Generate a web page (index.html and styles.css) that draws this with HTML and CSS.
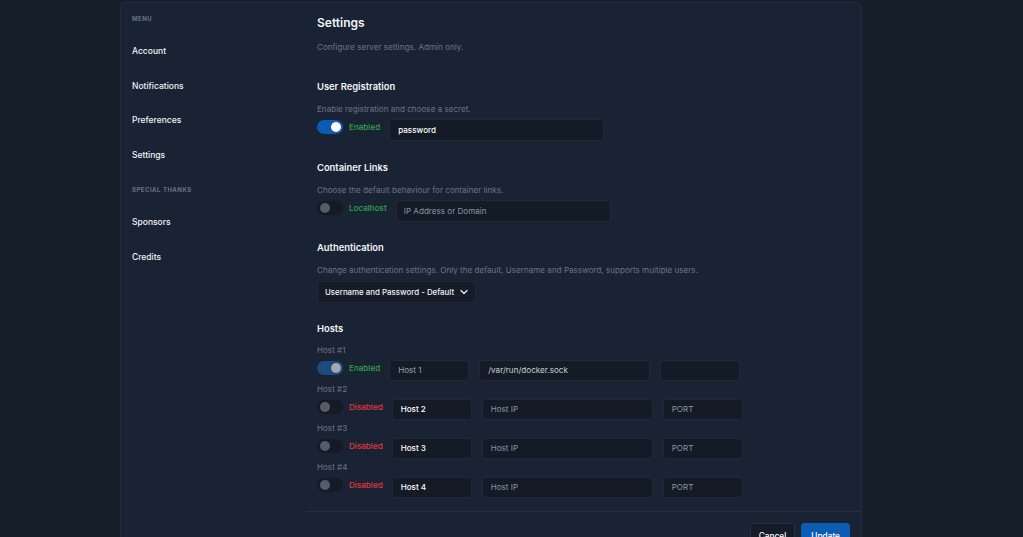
FILE: index.html
```html
<!DOCTYPE html>
<html lang="en">
<head>
<meta charset="utf-8">
<title>Settings</title>
<link rel="stylesheet" href="styles.css">
</head>
<body>
<div class="card">
  <aside class="sidebar">
    <div class="group-label">MENU</div>
    <a class="nav-item">Account</a>
    <a class="nav-item">Notifications</a>
    <a class="nav-item">Preferences</a>
    <a class="nav-item">Settings</a>
    <div class="group-label second">SPECIAL THANKS</div>
    <a class="nav-item">Sponsors</a>
    <a class="nav-item">Credits</a>
  </aside>
  <main class="main">
    <div class="content">
      <h1 class="title">Settings</h1>
      <p class="lead">Configure server settings. Admin only.</p>

      <h2 class="section-title">User Registration</h2>
      <p class="desc">Enable registration and choose a secret.</p>
      <div class="row">
        <span class="switch on"><span class="knob"></span></span>
        <span class="state green">Enabled</span>
        <div class="field w215 value">password</div>
      </div>

      <h2 class="section-title">Container Links</h2>
      <p class="desc">Choose the default behaviour for container links.</p>
      <div class="row">
        <span class="switch off"><span class="knob"></span></span>
        <span class="state green">Localhost</span>
        <div class="field w215 placeholder pad7">IP Address or Domain</div>
      </div>

      <h2 class="section-title">Authentication</h2>
      <p class="desc">Change authentication settings. Only the default, Username and Password, supports multiple users.</p>
      <div class="select">
        <span>Username and Password - Default</span>
        <svg class="chev" width="8" height="6" viewBox="0 0 8 6"><path d="M1 1.5 L4 4.5 L7 1.5" fill="none" stroke="#e6e9ee" stroke-width="1.3" stroke-linecap="round" stroke-linejoin="round"/></svg>
      </div>

      <h2 class="section-title hosts-title">Hosts</h2>
      <div class="host">
        <div class="host-label">Host #1</div>
        <div class="row host-row">
          <span class="switch on dim"><span class="knob"></span></span>
          <span class="state green">Enabled</span>
          <div class="field w80 muted">Host 1</div>
          <div class="field w171 soft">/var/run/docker.sock</div>
          <div class="field w80"></div>
        </div>
      </div>
      <div class="host">
        <div class="host-label">Host #2</div>
        <div class="row host-row">
          <span class="switch off"><span class="knob"></span></span>
          <span class="state red">Disabled</span>
          <div class="field w80 value">Host 2</div>
          <div class="field w171 placeholder">Host IP</div>
          <div class="field w80 placeholder">PORT</div>
        </div>
      </div>
      <div class="host">
        <div class="host-label">Host #3</div>
        <div class="row host-row">
          <span class="switch off"><span class="knob"></span></span>
          <span class="state red">Disabled</span>
          <div class="field w80 value">Host 3</div>
          <div class="field w171 placeholder">Host IP</div>
          <div class="field w80 placeholder">PORT</div>
        </div>
      </div>
      <div class="host">
        <div class="host-label">Host #4</div>
        <div class="row host-row">
          <span class="switch off"><span class="knob"></span></span>
          <span class="state red">Disabled</span>
          <div class="field w80 value">Host 4</div>
          <div class="field w171 placeholder">Host IP</div>
          <div class="field w80 placeholder">PORT</div>
        </div>
      </div>
    </div>
    <div class="footer">
      <button class="btn cancel">Cancel</button>
      <button class="btn primary">Update</button>
    </div>
  </main>
</div>
</body>
</html>
```

FILE: styles.css
```css
* { box-sizing: border-box; }
html, body { margin: 0; padding: 0; }
body {
  background: #161e2a;
  font-family: "Inter", "Lato", sans-serif;
  color: #e8ebf0;
  height: 537px;
  overflow: hidden;
}
.card {
  margin: 2px 0 0 120px;
  width: 742px;
  height: 560px;
  background: #1a2333;
  border: 1px solid #222c3c;
  border-radius: 5px;
  display: grid;
  grid-template-columns: 185px 1fr;
}
.sidebar {
  padding: 12px 0 0 11px;
  display: flex;
  flex-direction: column;
}
.group-label {
  font-size: 6px;
  line-height: 8px;
  font-weight: 700;
  letter-spacing: 0.5px;
  color: #677387;
  height: 8px;
  flex: none;
}
.group-label.second { margin-top: 25.5px; }
.nav-item {
  font-size: 8.5px;
  line-height: 12px;
  font-weight: 500;
  color: #f1f3f6;
  margin-top: 22.5px;
  flex: none;
}
.group-label + .nav-item { margin-top: 22px; }
.main {
  display: flex;
  flex-direction: column;
}
.content {
  padding: 12px 0 13px 11px;
  border-bottom: 1px solid #253043;
}
.title {
  margin: 0;
  font-size: 12px;
  line-height: 16px;
  font-weight: 600;
  color: #f2f4f7;
}
.lead, .desc {
  margin: 0;
  font-size: 8.1px;
  line-height: 12px;
  color: #687488;
}
.lead { margin-top: 10px; }
.section-title {
  margin: 20.5px 0 0;
  font-size: 9.4px;
  line-height: 12px;
  font-weight: 600;
  color: #f2f4f7;
}
.lead + .section-title { margin-top: 28px; }
.desc { margin-top: 10px; }
.row {
  display: flex;
  align-items: flex-start;
  margin-top: 4px;
  height: 22px;
}
.switch {
  width: 26px;
  height: 14px;
  margin-top: 1px;
  border-radius: 7px;
  position: relative;
  flex: none;
}
.switch .knob {
  position: absolute;
  top: 2px;
  width: 10px;
  height: 10px;
  border-radius: 50%;
}
.switch.on { background: #0e59b2; }
.switch.on .knob { right: 2.5px; background: #ffffff; }
.switch.on.dim { background: #1d4b80; }
.switch.on.dim .knob { background: #a3a8b0; }
.switch.off { background: #141b26; }
.switch.off .knob { left: 2.5px; background: #555d6b; }
.state {
  margin: 1px 9px 0 6px;
  font-size: 8.1px;
  line-height: 14px;
  font-weight: 500;
}
.green { color: #2ea84a; }
.red { color: #e0383e; }
.field {
  height: 22px;
  background: #141b26;
  border: 1px solid #1f2937;
  border-radius: 3px;
  padding: 0 8px;
  display: flex;
  align-items: center;
  font-size: 8.1px;
  flex: none;
}
.pad7 { padding-left: 7px; }
.w215 { width: 215px; }
.w80 { width: 80px; }
.w171 { width: 171px; }
.field + .field { margin-left: 10px; }
.value { color: #ffffff; font-weight: 500; }
.placeholder { color: #8a94a4; }
.muted { color: #9aa2ae; }
.soft { color: #c9ced6; }
.select {
  margin-top: 5px;
  width: max-content;
  height: 22px;
  background: #151c28;
  border: 1px solid #1f2937;
  border-radius: 3px;
  padding: 0 7px;
  display: flex;
  align-items: center;
  font-size: 7.9px;
  font-weight: 500;
  color: #eef0f4;
}
.chev { margin-left: 6px; flex: none; }
.section-title.hosts-title { margin-top: 19.5px; }
.host-label {
  font-size: 8.1px;
  line-height: 12px;
  color: #6a7589;
  margin-top: 2px;
}
.hosts-title + .host .host-label { margin-top: 9px; }
.host-row { margin-top: 4px; height: 21px; }
.host-row .field { height: 21px; }
.footer {
  display: flex;
  justify-content: flex-end;
  gap: 6px;
  padding: 11px 11px 0 0;
}
.btn {
  font-family: inherit;
  font-size: 8.3px;
  font-weight: 500;
  height: 26px;
  border-radius: 3px;
  color: #ffffff;
  padding: 0 8px;
}
.cancel {
  background: #151c28;
  border: 1px solid #253043;
}
.primary {
  background: #0c5cb4;
  border: 1px solid #0c5cb4;
  padding: 0 9px;
}
```
